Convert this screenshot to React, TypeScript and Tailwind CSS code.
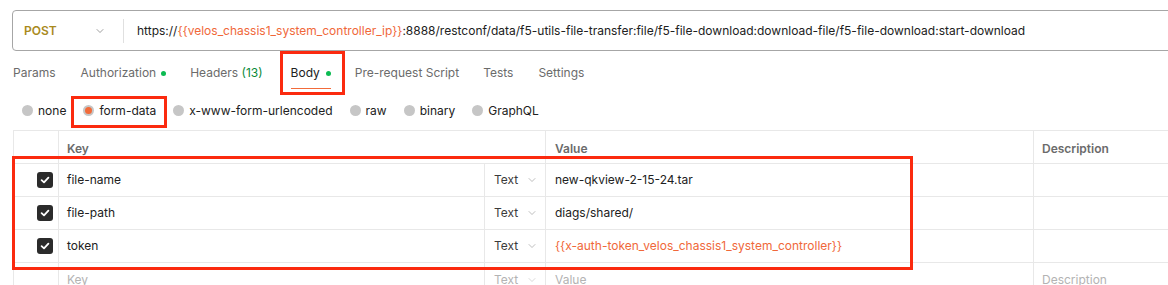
import React from "react";
import { ChevronDown } from "lucide-react";

const ORANGE = "text-[#f0683a]";

function Chevron({ className = "" }: { className?: string }) {
  return <ChevronDown size={12} strokeWidth={1.3} className={className} />;
}

function Radio({ label, selected = false }: { label: string; selected?: boolean }) {
  return (
    <div className="flex items-center gap-[5px]">
      <span className="flex h-[11px] w-[11px] items-center justify-center rounded-full bg-[#c6c6c6]">
        {selected && <span className="h-[7px] w-[7px] rounded-full bg-[#f26b3a]" />}
      </span>
      <span className="text-[#212121]">{label}</span>
    </div>
  );
}

function Check() {
  return (
    <span className="flex h-[16px] w-[16px] items-center justify-center rounded-[3px] bg-[#2b2b2b]">
      <svg width="10" height="10" viewBox="0 0 10 10" fill="none">
        <path d="M1.6 5.2 L4 7.4 L8.4 2.6" stroke="white" strokeWidth="1.8" strokeLinecap="round" strokeLinejoin="round" />
      </svg>
    </span>
  );
}

const rows: { key: string; value: React.ReactNode }[] = [
  { key: "file-name", value: <span className="text-[#212121]">new-qkview-2-15-24.tar</span> },
  { key: "file-path", value: <span className="text-[#212121]">diags/shared/</span> },
  {
    key: "token",
    value: <span className={ORANGE}>{"{{x-auth-token_velos_chassis1_system_controller}}"}</span>,
  },
];

const gridCols = "grid grid-cols-[45px_426px_61px_488px_1fr]";

export default function App() {
  return (
    <div
      className="relative h-[285px] w-[1168px] overflow-hidden bg-white text-[12px] text-[#212121]"
      style={{ fontFamily: "Inter, 'Noto Sans', sans-serif" }}
    >
      <div className="pl-[12px] pt-[10px]">
        {/* URL bar */}
        <div className="flex h-[41px] w-[1180px] items-center rounded-[4px] border border-[#a6a6a6]">
          <div className="flex w-[110px] items-center justify-between pl-[11px] pr-[17px]">
            <span className="font-semibold text-[#a98a1d]">POST</span>
            <Chevron className="text-[#6b6b6b]" />
          </div>
          <div className="h-[24px] w-px bg-[#e0e0e0]" />
          <div className="pl-[13px] text-[#212121]">
            https://<span className={ORANGE}>{"{{velos_chassis1_system_controller_ip}}"}</span>
            :8888/restconf/data/f5-utils-file-transfer:file/f5-file-download:download-file/f5-file-download:start-download
          </div>
        </div>

        {/* Tabs */}
        <div className="mt-[4px] flex h-[36px] items-center text-[#6b6b6b]">
          <div className="pl-[1px] pr-[25px]">Params</div>
          <div className="flex items-center gap-[5px] pr-[24px]">
            Authorization <span className="h-[5px] w-[5px] rounded-full bg-[#0cbb52]" />
          </div>
          <div className="pr-[28px]">
            Headers <span className="text-[#0a8a3a]">(13)</span>
          </div>
          <div className="relative flex h-full items-center gap-[6px] pr-[24px] text-[#212121]">
            Body <span className="h-[5px] w-[5px] rounded-full bg-[#0cbb52]" />
            <span className="absolute bottom-[2px] left-0 h-[1.5px] w-[40px] bg-[#f26b3a]" />
          </div>
          <div className="pr-[24px]">Pre-request Script</div>
          <div className="pr-[25px]">Tests</div>
          <div>Settings</div>
        </div>

        {/* Body types */}
        <div className="flex h-[39px] items-center gap-[17px] pl-[10px]">
          <Radio label="none" />
          <Radio label="form-data" selected />
          <Radio label="x-www-form-urlencoded" />
          <Radio label="raw" />
          <Radio label="binary" />
          <Radio label="GraphQL" />
        </div>
      </div>

      {/* Table */}
      <div className="ml-[13px] w-[1180px] border-t border-[#e8e8e8]">
        <div className={`${gridCols} h-[33px] border-b border-[#e8e8e8] font-semibold text-[#6b6b6b]`}>
          <div className="border-l border-[#e8e8e8]" />
          <div className="col-span-2 flex items-center border-l border-[#e8e8e8] pl-[8px] pt-[3px]">Key</div>
          <div className="flex items-center border-l border-[#e8e8e8] pl-[9px] pt-[3px]">Value</div>
          <div className="flex items-center border-l border-[#e8e8e8] pl-[8px] pt-[3px]">Description</div>
        </div>
        {rows.map((r) => (
          <div key={r.key} className={`${gridCols} h-[33px] border-b border-[#e8e8e8]`}>
            <div className="flex items-center justify-end border-l border-[#e8e8e8] pr-[5px]">
              <Check />
            </div>
            <div className="flex items-center border-l border-[#e8e8e8] pl-[8px]">{r.key}</div>
            <div className="flex items-center gap-[8px] border-l border-[#e8e8e8] pl-[9px] text-[#3b3b3b]">
              Text <Chevron className="text-[#9a9a9a]" />
            </div>
            <div className="flex items-center border-l border-[#e8e8e8] pl-[9px]">{r.value}</div>
            <div className="border-l border-[#e8e8e8]" />
          </div>
        ))}
        <div className={`${gridCols} h-[33px] text-[#b3b3b3]`}>
          <div className="border-l border-[#e8e8e8]" />
          <div className="flex items-center border-l border-[#e8e8e8] pl-[8px]">Key</div>
          <div className="flex items-center gap-[8px] border-l border-[#e8e8e8] pl-[9px]">
            Text <Chevron className="text-[#c4c4c4]" />
          </div>
          <div className="flex items-center border-l border-[#e8e8e8] pl-[9px]">Value</div>
          <div className="flex items-center border-l border-[#e8e8e8] pl-[8px]">Description</div>
        </div>
      </div>

      {/* Annotation boxes */}
      <div className="pointer-events-none absolute left-[280px] top-[51px] h-[44px] w-[65px] border-[3px] border-[#fb2a0f]" />
      <div className="pointer-events-none absolute left-[71px] top-[96px] h-[32px] w-[96px] border-[3px] border-[#fb2a0f]" />
      <div className="pointer-events-none absolute left-[12px] top-[156px] h-[114px] w-[901px] border-[3px] border-[#fb2a0f]" />
    </div>
  );
}
